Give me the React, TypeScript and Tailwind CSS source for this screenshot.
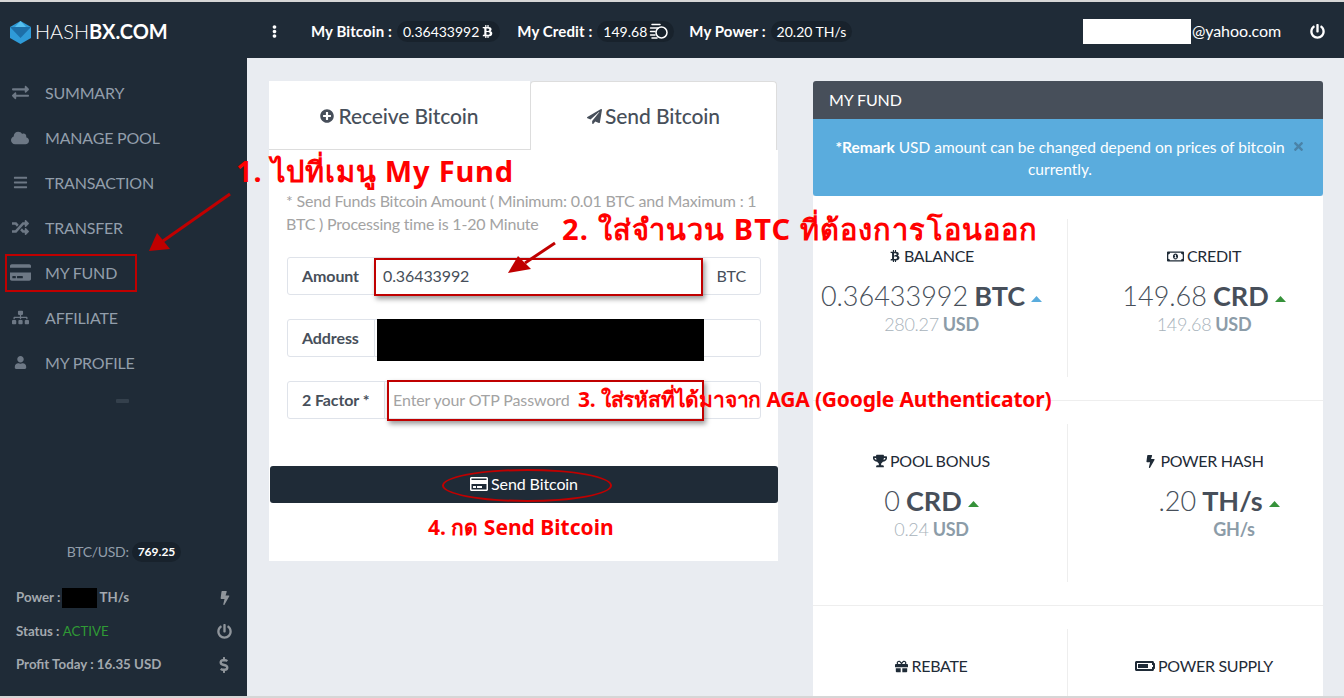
import type { ReactNode } from "react";
import {
  FaBars,
  FaBtc,
  FaBolt,
  FaCloud,
  FaDollarSign,
  FaEllipsisV,
  FaExchangeAlt,
  FaGift,
  FaRegMoneyBillAlt,
  FaPaperPlane,
  FaPlusCircle,
  FaPowerOff,
  FaRandom,
  FaRegCreditCard,
  FaCreditCard,
  FaSitemap,
  FaTimes,
  FaTrophy,
  FaUser,
  FaBatteryThreeQuarters,
} from "react-icons/fa";

const menu = [
  { label: "SUMMARY", icon: <FaExchangeAlt size={17} /> },
  { label: "MANAGE POOL", icon: <FaCloud size={18} /> },
  { label: "TRANSACTION", icon: <FaBars size={15} /> },
  { label: "TRANSFER", icon: <FaRandom size={17} /> },
  { label: "MY FUND", icon: <FaCreditCard size={21} /> },
  { label: "AFFILIATE", icon: <FaSitemap size={17} /> },
  { label: "MY PROFILE", icon: <FaUser size={13} /> },
];

function Pill({ children }: { children: ReactNode }) {
  return (
    <span className="flex h-[21px] items-center gap-[2px] rounded-full bg-[#18222c] px-[6px] text-[14px] tracking-normal text-white">
      {children}
    </span>
  );
}

function CoinsIcon() {
  return (
    <svg width="19" height="16" viewBox="0 0 19 16" fill="none" stroke="white" strokeWidth="1.5">
      <path d="M3 1.5 H11 M1.5 5 H9 M1.5 8.5 H6 M1.5 12 H6 M3 15 H8" strokeLinecap="round" />
      <circle cx="12.5" cy="9.5" r="5.5" />
    </svg>
  );
}

function Triangle({ color }: { color: string }) {
  return (
    <svg width="11" height="6" viewBox="0 0 11 6" className="ml-[6px] mt-[6px] inline-block">
      <path d="M5.5 0 L11 6 L0 6 Z" fill={color} />
    </svg>
  );
}

function Stat({
  icon,
  label,
  value,
  unit,
  sub,
  subUnit,
  color = "#36923a",
  valueClass = "",
  subClass = "",
}: {
  icon: ReactNode;
  label: string;
  value?: string;
  unit?: string;
  sub?: string;
  subUnit?: string;
  color?: string;
  valueClass?: string;
  subClass?: string;
}) {
  return (
    <div className="flex flex-col items-center pt-[28px]">
      <div className="flex h-[18px] items-center gap-[3px] text-[16px] leading-[18px] tracking-[-0.3px] text-[#1f2b37]">
        {icon}
        {label}
      </div>
      {unit && (
        <div className={`${valueClass} mt-[14px] flex h-[34px] items-center text-[27px] leading-[34px] text-[#474f5a]`}>
          <span className="font-light">{value}</span>
          <span className="ml-[6px] font-bold">{unit}</span>
          <Triangle color={color} />
        </div>
      )}
      {subUnit && (
        <div className={`${subClass} flex h-[22px] items-center text-[18px] leading-[22px] tracking-[-0.3px] text-[#a8b3bb]`}>
          <span className="font-light">{sub}</span>
          <span className="ml-[4px] font-bold text-[#8c9ca8]">{subUnit}</span>
        </div>
      )}
    </div>
  );
}

function FormRow({
  label,
  labelWidth,
  children,
  suffix,
}: {
  label: string;
  labelWidth: string;
  children?: ReactNode;
  suffix?: string;
}) {
  return (
    <div className="flex h-[38px] items-center rounded-[3px] border border-[#dfe3ea] text-[16px] tracking-[-0.1px] text-[#474f5a]">
      <div className={`${labelWidth} flex h-full items-center border-r border-[#dfe3ea] pl-[14px] font-bold`}>
        {label}
      </div>
      <div className="flex-1 pl-[8px]">{children}</div>
      {suffix && <div className="pr-[14px]">{suffix}</div>}
    </div>
  );
}

export default function App() {
  return (
    <div className="relative flex h-[698px] w-[1344px] flex-col overflow-hidden border-y-2 border-[#d6d6d6] bg-[#e9ecf1] font-['Lato',sans-serif]">
      {/* top bar */}
      <header className="flex h-[56px] shrink-0 items-center bg-[#1f2b37] pt-[2px] text-white">
        <div className="flex w-[247px] items-center pl-[10px]">
          <svg width="21" height="23" viewBox="0 0 21 23" className="mt-[2px]">
            <path d="M10.5 0 L21 6 L21 17 L10.5 23 L0 17 L0 6 Z" fill="#2f9bd8" />
            <path d="M0 6 L21 6 L10.5 17 Z" fill="#1d6fa8" />
            <path d="M5 6 L10.5 0 L16 6 Z" fill="#57c0ee" />
          </svg>
          <span className="ml-[4px] text-[20px] font-light">HASH</span>
          <span className="text-[20px] font-bold">BX.COM</span>
        </div>
        <FaEllipsisV size={13} className="ml-[21px]" />
        <div className="ml-[30px] flex items-center gap-[17px] text-[15px] font-bold tracking-[0.1px]">
          <div className="flex items-center gap-[5px]">
            My Bitcoin :
            <Pill>
              <span className="font-normal">0.36433992</span>
              <FaBtc size={13} />
            </Pill>
          </div>
          <div className="flex items-center gap-[5px]">
            My Credit :
            <Pill>
              <span className="font-normal">149.68</span>
              <CoinsIcon />
            </Pill>
          </div>
          <div className="-ml-[2px] flex items-center gap-[5px]">
            My Power :
            <Pill>
              <span className="font-normal">20.20 TH/s</span>
            </Pill>
          </div>
        </div>
        <div className="ml-auto flex items-center pr-[19px]">
          <div className="h-[25px] w-[108px] bg-white" />
          <span className="ml-[1px] text-[16px] tracking-[-0.1px]">@yahoo.com</span>
          <FaPowerOff size={15} className="ml-[29px]" />
        </div>
      </header>

      <div className="flex flex-1 overflow-hidden">
        {/* sidebar */}
        <aside className="flex w-[247px] flex-col bg-[#1f2b37]">
          <nav className="flex flex-col pt-[12px]">
            {menu.map((item) => (
              <div key={item.label} className="flex h-[45px] items-center text-[16px] tracking-[-0.2px] text-[#929eab]">
                <div className="flex w-[45px] justify-center pr-[5px] text-[#6d7885]">{item.icon}</div>
                {item.label}
              </div>
            ))}
          </nav>
          <div className="mt-[14px] flex justify-end pr-[118px]">
            <div className="h-[4px] w-[13px] rounded-[1px] bg-[#34404c]" />
          </div>
          <div className="mt-auto pb-[21px]">
            <div className="flex items-center justify-center gap-[3px] pl-[1px] text-[14px] tracking-[-0.3px] text-[#929eab]">
              BTC/USD:
              <span className="rounded-full bg-[#18222c] px-[6px] py-[1px] text-[12px] font-bold tracking-normal text-white">769.25</span>
            </div>
            <div className="mt-[26px] flex flex-col gap-[13.5px] pl-[16px] pr-[15px] text-[13.3px] font-bold text-[#a3a9af]">
              <div className="flex h-[20px] items-center justify-between">
                <div className="flex items-center">
                  Power :<span className="mx-[2px] h-[20px] w-[35px] bg-black" />TH/s
                </div>
                <FaBolt size={14} className="text-[#8f959b]" />
              </div>
              <div className="flex h-[20px] items-center justify-between">
                <div>
                  Status : <span className="font-normal text-[#2f9a35]">ACTIVE</span>
                </div>
                <FaPowerOff size={15} className="text-[#8f959b]" />
              </div>
              <div className="flex h-[20px] items-center justify-between">
                Profit Today : 16.35 USD
                <FaDollarSign size={16} className="text-[#8f959b]" />
              </div>
            </div>
          </div>
        </aside>

        {/* content */}
        <main className="flex flex-1 items-start gap-[35px] pl-[22px] pt-[23px]">
          <section className="w-[509px]">
            <div className="flex h-[69px] text-[21px] font-medium tracking-[-0.1px] text-[#474f5a]">
              <div className="flex w-[261px] items-center justify-center gap-[4px] border-b border-[#dddddd] bg-white pt-[2px]">
                <FaPlusCircle size={14} />
                Receive Bitcoin
              </div>
              <div className="flex w-[247px] items-center justify-center gap-[3px] rounded-t-[4px] border border-b-0 border-[#dddddd] bg-white">
                <FaPaperPlane size={15} />
                Send Bitcoin
              </div>
            </div>
            <div className="h-[411px] bg-white">
              <p className="px-[17px] pt-[39px] text-[16px] leading-[23px] tracking-[-0.2px] text-[#a3a3a3]">
                * Send Funds Bitcoin Amount ( Minimum: 0.01 BTC and Maximum : 1 BTC ) Processing time is 1-20 Minute
              </p>
              <div className="mt-[22px] flex flex-col gap-[24px] pl-[18px] pr-[17px]">
                <FormRow label="Amount" labelWidth="w-[87px]" suffix="BTC">
                  0.36433992
                </FormRow>
                <FormRow label="Address" labelWidth="w-[87px]" />
                <FormRow label="2 Factor *" labelWidth="w-[97px]">
                  <span className="text-[#a3a3a3]">Enter your OTP Password</span>
                </FormRow>
              </div>
              <button className="ml-[1px] mt-[47px] flex h-[37px] w-[508px] items-center justify-center gap-[3px] rounded-[3px] bg-[#1f2b37] pb-[1px] text-[16px] tracking-[-0.1px] text-white">
                <FaRegCreditCard size={18} />
                Send Bitcoin
              </button>
            </div>
          </section>

          <section className="flex h-[615px] w-[510px] flex-col">
            <div className="flex h-[38px] shrink-0 items-center rounded-t-[3px] bg-[#474f5a] pl-[16px] text-[16px] tracking-[-0.1px] text-white">
              MY FUND
            </div>
            <div className="relative h-[77px] shrink-0 rounded-b-[3px] bg-[#5aacdd] pl-[20px] pr-[36px] pt-[17px] text-center text-[15.5px] leading-[22px] text-white">
              <b>*Remark</b> USD amount can be changed depend on prices of bitcoin currently.
              <FaTimes size={13} className="absolute right-[18px] top-[21px] text-[#4a83a8]" />
            </div>
            <div className="min-h-0 flex-1 overflow-hidden bg-white">
              <div className="border-b border-[#eeeeee] py-[23px]">
                <div className="grid h-[158px] grid-cols-2">
                  <div className="border-r border-[#eeeeee] pr-[17px]">
                    <Stat icon={<FaBtc size={12} />} label="BALANCE" value="0.36433992" unit="BTC" sub="280.27" subUnit="USD" color="#5aacdd" />
                  </div>
                  <div className="pl-[17px]">
                    <Stat icon={<FaRegMoneyBillAlt size={17} />} label="CREDIT" value="149.68" unit="CRD" sub="149.68" subUnit="USD" />
                  </div>
                </div>
              </div>
              <div className="border-b border-[#eeeeee] py-[23px]">
                <div className="grid h-[158px] grid-cols-2">
                  <div className="border-r border-[#eeeeee] pr-[17px]">
                    <Stat icon={<FaTrophy size={14} />} label="POOL BONUS" value="0" unit="CRD" sub="0.24" subUnit="USD" />
                  </div>
                  <div className="pl-[17px]">
                    <Stat icon={<FaBolt size={13} />} label="POWER HASH" value=".20" unit="TH/s" subUnit="GH/s" valueClass="ml-[30px]" subClass="ml-[56px]" />
                  </div>
                </div>
              </div>
              <div className="mt-[23px] grid h-[70px] grid-cols-2">
                <div className="border-r border-[#eeeeee] pr-[17px]">
                  <Stat icon={<FaGift size={13} />} label="REBATE" />
                </div>
                <div className="pl-[17px]">
                  <Stat icon={<FaBatteryThreeQuarters size={20} />} label="POWER SUPPLY" />
                </div>
              </div>
            </div>
          </section>
        </main>
      </div>

      {/* tutorial annotations drawn over the screenshot */}
      <div className="absolute left-[377px] top-[317px] h-[42px] w-[327px] bg-black" />
      <div className="absolute left-[5px] top-[252px] h-[38px] w-[132px] border-2 border-[#c00000]" />
      <div className="absolute left-[374px] top-[256px] h-[38px] w-[329px] border-2 border-[#c00000] shadow-[2px_3px_5px_rgba(0,0,0,0.4)]" />
      <div className="absolute left-[387px] top-[378px] h-[41px] w-[317px] border-2 border-[#c00000] shadow-[2px_3px_5px_rgba(0,0,0,0.4)]" />
      <div className="absolute left-[442px] top-[467px] h-[33px] w-[170px] rounded-[50%] border-[2.5px] border-[#c00000]" />
      <svg width="1344" height="698" className="pointer-events-none absolute left-0 top-[-2px]">
        <path d="M230 194 L163 241" stroke="#c00000" strokeWidth="3" />
        <path d="M149 251 L157 233 L170 249 Z" fill="#c00000" />
        <path d="M555 243 L525 263" stroke="#c00000" strokeWidth="3" />
        <path d="M508 273 L518 256 L531 269 Z" fill="#c00000" />
      </svg>
      <div className="absolute left-[236px] top-[149px] whitespace-nowrap font-['Noto_Sans',sans-serif] text-[29px] font-bold leading-[40px] tracking-[0.8px] text-[#ff0000]">
        1. ไปที่เมนู My Fund
      </div>
      <div className="absolute left-[562px] top-[207px] whitespace-nowrap font-['Noto_Sans',sans-serif] text-[29px] font-bold leading-[40px] tracking-[1.1px] text-[#ff0000]">
        2. ใส่จำนวน BTC ที่ต้องการโอนออก
      </div>
      <div className="absolute left-[578px] top-[383px] whitespace-nowrap font-['Noto_Sans',sans-serif] text-[21px] font-bold leading-[28px] tracking-[-0.2px] text-[#ff0000]">
        3. ใส่รหัสที่ได้มาจาก AGA (Google Authenticator)
      </div>
      <div className="absolute left-[428px] top-[511px] whitespace-nowrap font-['Noto_Sans',sans-serif] text-[21px] font-bold leading-[28px] text-[#ff0000]">
        4. กด Send Bitcoin
      </div>
    </div>
  );
}
